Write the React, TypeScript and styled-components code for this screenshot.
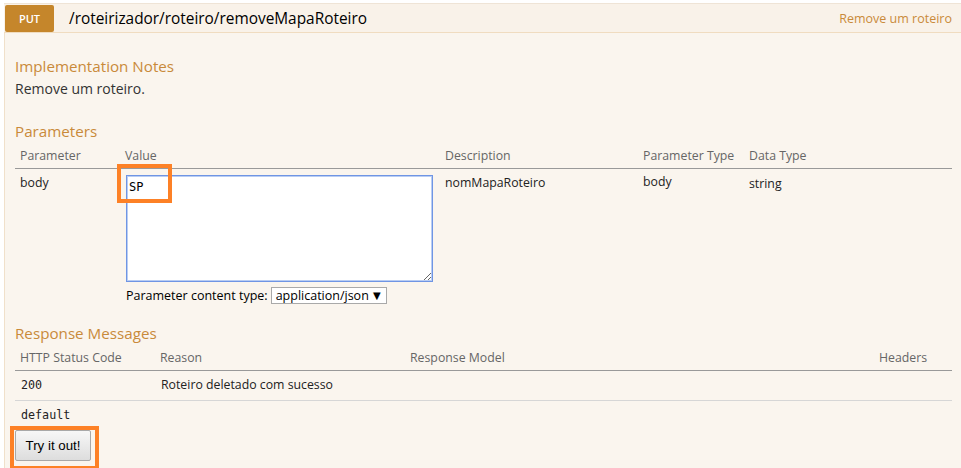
import React from "react";
import styled, { createGlobalStyle } from "styled-components";

const Global = createGlobalStyle`
  html, body { margin: 0; padding: 0; background: #ffffff; }
  body { font-family: "Open Sans", "Noto Sans", sans-serif; color: #333; }
  * { box-sizing: border-box; }
`;

const Operation = styled.div`
  margin: 3px 0 0 4px;
  width: 957px;
  height: 465px;
  display: flex;
  flex-direction: column;
  overflow: hidden;
`;

const Heading = styled.div`
  display: flex;
  align-items: center;
  height: 30px;
  background: #f9f2e9;
  border-top: 1px solid #efe4d6;
  border-bottom: 1px solid #f0dcc0;
  padding-left: 1px;
`;

const Method = styled.span`
  display: flex;
  align-items: center;
  justify-content: center;
  width: 49px;
  height: 27px;
  background: #c5862b;
  color: #fff;
  font-size: 11px;
  font-weight: 600;
  border-radius: 2px;
`;

const Path = styled.span`
  margin-left: 15px;
  font-size: 15.4px;
  color: #000;
`;

const Summary = styled.span`
  margin-left: auto;
  padding-right: 9px;
  font-size: 12.5px;
  color: #c98a3a;
`;

const Content = styled.div`
  flex: 1;
  background: #faf5ee;
  border-left: 1px solid #f0e0ca;
  padding: 22px 9px 0 10px;
`;

const SectionTitle = styled.h4<{ $top?: number }>`
  margin: ${(p) => p.$top ?? 0}px 0 0 0;
  font-size: 15.2px;
  font-weight: 400;
  line-height: 22px;
  color: #c98a3a;
`;

const Note = styled.p`
  margin: 3px 0 0 0;
  font-size: 14px;
  line-height: 18px;
  color: #333;
`;

const Table = styled.table`
  width: 100%;
  border-collapse: collapse;
  table-layout: fixed;
  font-size: 12.3px;
  margin-top: 2px;
`;

const Th = styled.th<{ $w?: number }>`
  width: ${(p) => (p.$w ? `${p.$w}px` : "auto")};
  text-align: left;
  font-weight: 400;
  color: #666;
  padding: 3px 5px 3px 5px;
  line-height: 18px;
  white-space: nowrap;
  border-bottom: 1px solid #999;
`;

const Td = styled.td<{ $mono?: boolean; $pad?: string; $line?: boolean }>`
  vertical-align: top;
  padding: ${(p) => p.$pad ?? "5px 5px 0 5px"};
  line-height: 18px;
  color: #222;
  font-family: ${(p) => (p.$mono ? '"DejaVu Sans Mono", monospace' : "inherit")};
  font-size: ${(p) => (p.$mono ? "11.7px" : "12.3px")};
  border-bottom: ${(p) => (p.$line ? "1px solid #d6d6d6" : "none")};
`;

const ValueCell = styled.td`
  vertical-align: top;
  padding: 6px 5px 0 5px;
`;

const AreaWrap = styled.div`
  position: relative;
  width: 307px;
`;

const Area = styled.textarea`
  display: block;
  width: 307px;
  height: 107px;
  margin-left: 1px;
  padding: 4px 2px;
  border: 1px solid #6f95e4;
  box-shadow: 0 0 0 1px #b9cdf3 inset;
  background: #fff;
  font-family: "DejaVu Sans Mono", monospace;
  font-size: 12px;
  color: #000;
  outline: none;
  resize: both;
`;

const Highlight = styled.div<{ $l: number; $t: number; $w: number; $h: number }>`
  position: absolute;
  left: ${(p) => p.$l}px;
  top: ${(p) => p.$t}px;
  width: ${(p) => p.$w}px;
  height: ${(p) => p.$h}px;
  border: 4px solid #fd8126;
  pointer-events: none;
`;

const ContentType = styled.div`
  display: flex;
  align-items: center;
  gap: 3px;
  height: 17px;
  margin: 5px 0 0 1px;
  font-size: 12.5px;
  color: #000;
`;

const SelectBox = styled.span`
  display: inline-flex;
  align-items: center;
  justify-content: space-between;
  width: 116px;
  height: 17px;
  padding: 0 5px 0 4px;
  background: #fff;
  border: 1px solid #a9a9a9;
  font-size: 12.5px;
  color: #000;
`;

const Arrow = styled.span`
  font-family: "DejaVu Sans", sans-serif;
  font-size: 10px;
  color: #000;
`;

const ButtonWrap = styled.div`
  position: relative;
  width: 76px;
  margin-top: 6px;
`;

const Button = styled.button`
  display: block;
  width: 76px;
  height: 31px;
  padding: 0;
  border: 1px solid #a8a8a8;
  border-radius: 2px;
  background: linear-gradient(#f7f7f7, #dddddd);
  font-family: "Liberation Sans", Arial, sans-serif;
  font-size: 13.3px;
  color: #000;
`;

export default function App() {
  return (
    <>
      <Global />
      <Operation>
        <Heading>
          <Method>PUT</Method>
          <Path>/roteirizador/roteiro/removeMapaRoteiro</Path>
          <Summary>Remove um roteiro</Summary>
        </Heading>
        <Content>
          <SectionTitle>Implementation Notes</SectionTitle>
          <Note>Remove um roteiro.</Note>

          <SectionTitle $top={22}>Parameters</SectionTitle>
          <Table>
            <thead>
              <tr>
                <Th $w={105}>Parameter</Th>
                <Th $w={320}>Value</Th>
                <Th $w={198}>Description</Th>
                <Th $w={106}>Parameter Type</Th>
                <Th>Data Type</Th>
              </tr>
            </thead>
            <tbody>
              <tr>
                <Td>body</Td>
                <ValueCell>
                  <AreaWrap>
                    <Area defaultValue="SP" />
                    <Highlight $l={-8} $t={-11} $w={55} $h={39} />
                  </AreaWrap>
                  <ContentType>
                    Parameter content type:
                    <SelectBox>
                      application/json <Arrow>▼</Arrow>
                    </SelectBox>
                  </ContentType>
                </ValueCell>
                <Td>nomMapaRoteiro</Td>
                <Td $pad="4px 5px 0 5px">body</Td>
                <Td $pad="6px 5px 0 5px">string</Td>
              </tr>
            </tbody>
          </Table>

          <SectionTitle $top={18}>Response Messages</SectionTitle>
          <Table>
            <thead>
              <tr>
                <Th $w={140}>HTTP Status Code</Th>
                <Th $w={250}>Reason</Th>
                <Th>Response Model</Th>
                <Th $w={78}>Headers</Th>
              </tr>
            </thead>
            <tbody>
              <tr>
                <Td $mono $line $pad="5px 6px 6px 6px">200</Td>
                <Td $line $pad="5px 6px 6px 6px">Roteiro deletado com sucesso</Td>
                <Td $line $pad="5px 6px 6px 6px"></Td>
                <Td $line $pad="5px 6px 6px 6px"></Td>
              </tr>
              <tr>
                <Td $mono $pad="5px 6px 0 6px">default</Td>
                <Td $pad="5px 6px 0 6px"></Td>
                <Td $pad="5px 6px 0 6px"></Td>
                <Td $pad="5px 6px 0 6px"></Td>
              </tr>
            </tbody>
          </Table>
          <ButtonWrap>
            <Button>Try it out!</Button>
            <Highlight $l={-5} $t={-4} $w={89} $h={44} />
          </ButtonWrap>
        </Content>
      </Operation>
    </>
  );
}
